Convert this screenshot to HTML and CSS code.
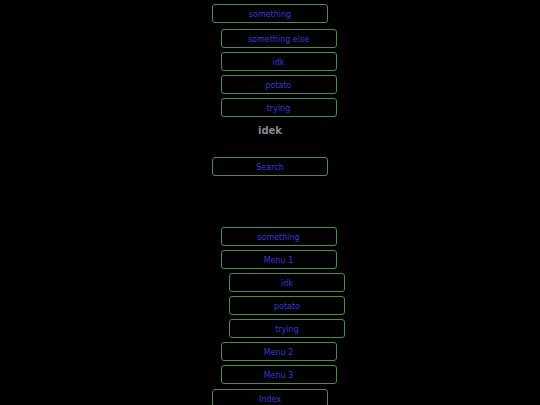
FILE: index.html
```html
<!DOCTYPE html>
<html>
<head>
<meta charset="utf-8">
<title>Menu</title>
<link rel="stylesheet" href="styles.css">
</head>
<body>
<div class="page">
  <a class="btn first">something</a>
  <div class="sub top-sub">
    <a class="btn">something else</a>
    <a class="btn">idk</a>
    <a class="btn">potato</a>
    <a class="btn">trying</a>
  </div>
  <div class="label">idek</div>
  <a class="btn search">Search</a>
  <div class="spacer"></div>
  <div class="sub">
    <a class="btn">something</a>
    <a class="btn">Menu 1</a>
    <div class="sub">
      <a class="btn">idk</a>
      <a class="btn">potato</a>
      <a class="btn">trying</a>
    </div>
    <a class="btn">Menu 2</a>
    <a class="btn">Menu 3</a>
  </div>
  <a class="btn index">Index</a>
</div>
</body>
</html>
```
FILE: styles.css
```css
html, body {
  margin: 0;
  padding: 0;
  background: #000;
}

.page {
  width: 540px;
  height: 405px;
  overflow: hidden;
  display: flex;
  flex-direction: column;
  font-family: "DejaVu Sans", Verdana, sans-serif;
}

.page > *,
.sub > * {
  flex-shrink: 0;
}

.sub {
  display: flex;
  flex-direction: column;
  padding-left: 17px;
}

.top-sub {
  margin-top: 2px;
}

.btn {
  display: flex;
  align-items: center;
  justify-content: center;
  box-sizing: border-box;
  width: 116px;
  height: 19px;
  margin: 4px auto 0;
  border: 1px solid #4a8c4a;
  border-radius: 3px;
  color: #3838d4;
  font-size: 8px;
  line-height: 1;
  padding-top: 3px;
}

.label {
  margin: 5px auto 0;
  height: 17px;
  line-height: 18px;
  color: #8a8a8a;
  font-weight: bold;
  font-size: 10px;
  text-align: center;
}

.btn.search {
  margin-top: 18px;
}

.spacer {
  height: 47px;
}

.btn.index {
  margin-top: 5px;
}
```
